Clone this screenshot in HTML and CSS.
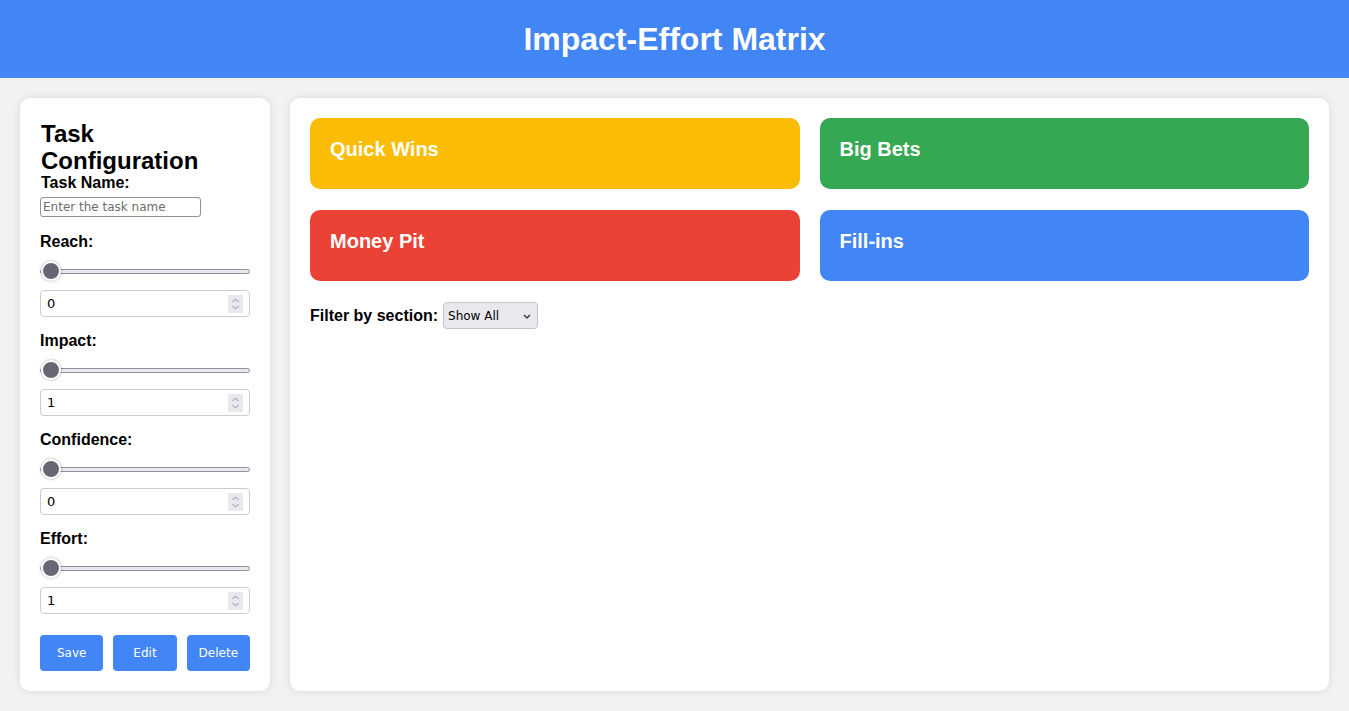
FILE: index.html
```html
<!DOCTYPE html>
<html lang="en">
<head>
<meta charset="utf-8">
<title>Impact-Effort Matrix</title>
<link rel="stylesheet" href="styles.css">
</head>
<body>
<header class="topbar"><h1 class="title">Impact-Effort Matrix</h1></header>
<div class="layout">
  <aside class="panel config">
    <h2 class="config-title">Task Configuration</h2>
    <label class="name-label" for="taskName">Task Name:</label>
    <input class="name-input" id="taskName" type="text" placeholder="Enter the task name">
    <div class="field">
      <label class="field-label">Reach:</label>
      <input class="range" type="range" min="0" max="10" value="0">
      <div class="num-wrap">
        <input class="num" type="number" value="0">
        <span class="spin"><svg width="9" height="14" viewBox="0 0 9 14"><path d="M1.5 5 L4.5 2 L7.5 5 M1.5 9 L4.5 12 L7.5 9" fill="none" stroke="#8f8f9d" stroke-width="1"/></svg></span>
      </div>
    </div>
    <div class="field">
      <label class="field-label">Impact:</label>
      <input class="range" type="range" min="1" max="10" value="1">
      <div class="num-wrap">
        <input class="num" type="number" value="1">
        <span class="spin"><svg width="9" height="14" viewBox="0 0 9 14"><path d="M1.5 5 L4.5 2 L7.5 5 M1.5 9 L4.5 12 L7.5 9" fill="none" stroke="#8f8f9d" stroke-width="1"/></svg></span>
      </div>
    </div>
    <div class="field">
      <label class="field-label">Confidence:</label>
      <input class="range" type="range" min="0" max="100" value="0">
      <div class="num-wrap">
        <input class="num" type="number" value="0">
        <span class="spin"><svg width="9" height="14" viewBox="0 0 9 14"><path d="M1.5 5 L4.5 2 L7.5 5 M1.5 9 L4.5 12 L7.5 9" fill="none" stroke="#8f8f9d" stroke-width="1"/></svg></span>
      </div>
    </div>
    <div class="field">
      <label class="field-label">Effort:</label>
      <input class="range" type="range" min="1" max="10" value="1">
      <div class="num-wrap">
        <input class="num" type="number" value="1">
        <span class="spin"><svg width="9" height="14" viewBox="0 0 9 14"><path d="M1.5 5 L4.5 2 L7.5 5 M1.5 9 L4.5 12 L7.5 9" fill="none" stroke="#8f8f9d" stroke-width="1"/></svg></span>
      </div>
    </div>
    <div class="actions">
      <button class="btn">Save</button>
      <button class="btn">Edit</button>
      <button class="btn">Delete</button>
    </div>
  </aside>
  <main class="panel matrix">
    <div class="grid">
      <section class="quad q-yellow"><h3 class="quad-title">Quick Wins</h3></section>
      <section class="quad q-green"><h3 class="quad-title">Big Bets</h3></section>
      <section class="quad q-red"><h3 class="quad-title">Money Pit</h3></section>
      <section class="quad q-blue"><h3 class="quad-title">Fill-ins</h3></section>
    </div>
    <div class="filter">
      <label class="filter-label" for="filter">Filter by section:</label>
      <div class="select-wrap">
        <select class="filter-select" id="filter">
          <option>Show All</option>
          <option>Quick Wins</option>
          <option>Big Bets</option>
          <option>Money Pit</option>
          <option>Fill-ins</option>
        </select>
        <svg class="chev" width="8" height="5" viewBox="0 0 8 5"><path d="M1 1 L4 4 L7 1" fill="none" stroke="#222" stroke-width="1.2"/></svg>
      </div>
    </div>
  </main>
</div>
</body>
</html>
```
FILE: styles.css
```css
* { box-sizing: border-box; }
html, body { height: 100%; }
body {
  margin: 0;
  font-family: "Liberation Sans", Arial, sans-serif;
  background: #f2f2f2;
  color: #000;
  display: flex;
  flex-direction: column;
}
.topbar {
  background: #4285f4;
  height: 78px;
  flex: none;
  display: flex;
  align-items: center;
  justify-content: center;
}
.title {
  margin: 0;
  color: #fff;
  font-size: 32px;
  font-weight: bold;
}
.layout {
  flex: 1;
  display: flex;
  gap: 20px;
  padding: 20px;
}
.panel {
  background: #fff;
  border-radius: 10px;
  box-shadow: 0 0 10px rgba(0,0,0,0.1);
  padding: 20px;
}
.config {
  width: 250px;
  flex: none;
  display: flex;
  flex-direction: column;
}
.config-title {
  margin: 2px 0 0 1px;
  font-size: 24px;
  line-height: 27px;
}
.name-label {
  font-weight: bold;
  font-size: 16px;
  margin-left: 1px;
  line-height: 18px;
}
.name-input {
  width: 161px;
  height: 20px;
  margin: 5px 0 0;
  padding: 1px 2px;
  font-family: "DejaVu Sans", sans-serif;
  font-size: 12px;
  border: 1px solid #8f8f9d;
  border-radius: 3px;
}
.name-input::placeholder { color: #6d6d6d; }
.field {
  display: flex;
  flex-direction: column;
  margin-top: 16px;
}
.field + .field { margin-top: 15px; }
.field-label {
  font-weight: bold;
  font-size: 16px;
  line-height: 18px;
}
.range {
  -webkit-appearance: none;
  appearance: none;
  width: 100%;
  height: 20px;
  margin: 10px 0 0;
  background: transparent;
}
.range::-webkit-slider-runnable-track {
  height: 5px;
  background: #e9e9ed;
  border: 1px solid #8f8f9d;
  border-radius: 3px;
}
.range::-webkit-slider-thumb {
  -webkit-appearance: none;
  width: 20px;
  height: 20px;
  margin-top: -8.5px;
  border-radius: 50%;
  background: #676774;
  border: 2px solid #fff;
  box-shadow: 0 0 3px rgba(0,0,0,0.35);
}
.num-wrap {
  position: relative;
  margin-top: 9px;
}
.num {
  display: block;
  width: 100%;
  height: 27px;
  padding: 4px 6px;
  border: 1px solid #ccc;
  border-radius: 4px;
  font-family: "DejaVu Sans", sans-serif;
  font-size: 13px;
  -moz-appearance: textfield;
}
.num::-webkit-inner-spin-button,
.num::-webkit-outer-spin-button {
  -webkit-appearance: none;
  margin: 0;
}
.spin {
  position: absolute;
  right: 7px;
  top: 5px;
  width: 15px;
  height: 18px;
  background: #e9e9ed;
  display: flex;
  align-items: center;
  justify-content: center;
  pointer-events: none;
}
.actions {
  display: flex;
  gap: 10px;
  margin-top: 21px;
}
.btn {
  flex: 1;
  height: 36px;
  border: none;
  border-radius: 4px;
  background: #4285f4;
  color: #fff;
  font-family: "DejaVu Sans", sans-serif;
  font-size: 12px;
  cursor: pointer;
}
.matrix {
  flex: 1;
}
.grid {
  display: grid;
  grid-template-columns: 1fr 1fr;
  gap: 21px 20px;
}
.quad {
  border-radius: 10px;
  padding: 20px 20px 28px;
  min-height: 71px;
  color: #fff;
}
.quad-title {
  margin: 0;
  font-size: 20px;
  line-height: 23px;
}
.q-yellow { background: #fbbc05; }
.q-green { background: #34a853; }
.q-red { background: #ea4335; }
.q-blue { background: #4285f4; }
.filter {
  margin-top: 21px;
  display: flex;
  align-items: center;
  gap: 5px;
}
.filter-label {
  font-weight: bold;
  font-size: 16px;
}
.select-wrap {
  position: relative;
}
.filter-select {
  -webkit-appearance: none;
  appearance: none;
  display: block;
  width: 95px;
  height: 27px;
  padding: 0 4px;
  font-family: "DejaVu Sans", sans-serif;
  font-size: 12px;
  color: #000;
  border: 1px solid #c3c3cb;
  border-radius: 4px;
  background: #e9e9ed;
}
.chev {
  position: absolute;
  right: 7px;
  top: 12px;
  pointer-events: none;
}
```
